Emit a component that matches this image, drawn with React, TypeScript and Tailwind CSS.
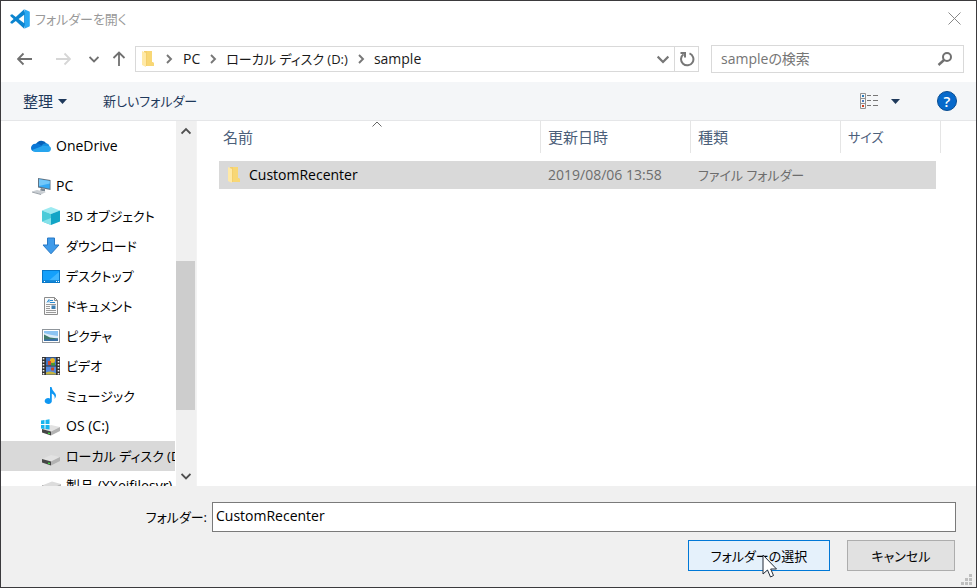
import type { ReactNode } from "react";

function VsCodeLogo() {
  return (
    <svg viewBox="0 0 100 100" className="size-5 shrink-0" aria-hidden="true">
      <path d="M71 1 L29 40 L11 26 L4 29 C1 31 1 34 4 37 L18 50 L4 63 C1 66 1 69 4 71 L11 74 L29 60 L71 99 L76 76 V24 Z" fill="#0b84cf" />
      <path d="M71 29 L43 50 L71 71 Z" fill="#fff" />
      <path d="M71 1 L97 13 Q99 14 99 17 V83 Q99 86 97 87 L71 99 Q74 98 74 94 V6 Q74 3 71 1 Z" fill="#2aa9f3" />
    </svg>
  );
}

function FolderIcon() {
  return (
    <svg viewBox="0 0 14 18" className="h-[18px] w-3.5 shrink-0" aria-hidden="true">
      <path d="M3 1H11V12L13 13V16H3Z" fill="#f4cf6c" />
      <path d="M6 1H11V12L13 13V16H6Z" fill="#f8d775" />
      <path d="M1 1L5 3V17L1 15Z" fill="#ffe9a6" />
    </svg>
  );
}

function Chevron({ dir = "right", className = "size-2.5" }: { dir?: "right" | "down" | "up"; className?: string }) {
  const points = { right: "3,1 7,5 3,9", down: "0.5,3 5,7.5 9.5,3", up: "0.5,7.5 5,3 9.5,7.5" }[dir];
  return (
    <svg viewBox="0 0 10 10" className={`shrink-0 ${className}`} fill="none" stroke="currentColor" strokeWidth="1.9" aria-hidden="true">
      <polyline points={points} />
    </svg>
  );
}

function Arrow({ dir }: { dir: "left" | "right" | "up" }) {
  const d = {
    left: "M15 8H1M6.5 2.5L1 8l5.500 5.500",
    right: "M1 8H15M9.500 2.500L15 8l-5.500 5.500",
    up: "M8 15V1.500M2.500 7L8 1.500l5.500 5.500",
  }[dir];
  return (
    <svg viewBox="0 0 16 16" className="size-4" fill="none" stroke="currentColor" strokeWidth="1.8" aria-hidden="true">
      <path d={d} />
    </svg>
  );
}

function Drive({ windows = false }: { windows?: boolean }) {
  return (
    <svg viewBox="0 0 20 20" className="size-5" aria-hidden="true">
      <path d="M1 13L10 9L19 11L10 15.500Z" fill="#e2e2e2" />
      <path d="M1 13L10 15.500V19.500L1 16.500Z" fill="#454545" />
      <path d="M10 15.500L19 11V15L10 19.500Z" fill="#b2b2b2" />
      <path d="M7 16.500l2 .6v1.200l-2-.6z" fill="#3fe03f" />
      {windows && <path d="M0 4.500l3.500-.5v4H0zM4.500 3.900L8.500 3.300v4.700H4.500zM0 9h3.500v4L0 12.500zM4.500 9H8.500v4.600l-4-.6z" fill="#18b4ee" />}
    </svg>
  );
}

const icons: Record<string, ReactNode> = {
  onedrive: (
    <svg viewBox="0 0 20 20" className="size-5" aria-hidden="true">
      <path d="M5 8A6 6 0 0 1 15.500 7.500L12 13L4 9Z" fill="#0560b8" />
      <path d="M4.500 7.700Q7 7 9.500 9L14 12L3 15.500Q0 15 0 11.800Q.3 8 4.500 7.700Z" fill="#0a77d6" />
      <path d="M10.500 9.500Q12 7.200 15.500 7.300Q18 8 18.500 10.300L17 13L11 12Z" fill="#158fe0" />
      <path d="M3 15.500Q1.500 15 1 14L12 9.800L18.500 10.300Q20 11 20 13Q19.500 16 17 16H5Q3.700 16 3 15.500Z" fill="#27a5ee" />
    </svg>
  ),
  pc: (
    <svg viewBox="0 0 20 20" className="size-5" aria-hidden="true">
      <path d="M7 2L19.500 4V14L7 11.500Z" fill="#5f7385" />
      <path d="M8 3.200L18.700 5V12.800L8 10.600Z" fill="#35a9f5" />
      <path d="M8 3.200L18.700 5V7.500L8 10Z" fill="#73c8fa" />
      <path d="M10 12l4 1v2.500l-5-1z" fill="#7a8792" />
      <path d="M1 15.500L6 14L15 16L10 18.500Z" fill="#c9ced3" />
      <path d="M1 15.500L10 18V19L1 16.500Z" fill="#9aa1a8" />
    </svg>
  ),
  objects: (
    <svg viewBox="0 0 20 20" className="size-5" aria-hidden="true">
      <path d="M10 1L19 4.500L10 8L1 4.500Z" fill="#9ceaf1" />
      <path d="M1 4.500L10 8V19L1 15.500Z" fill="#4bcbd9" />
      <path d="M19 4.500L10 8V19L19 15.500Z" fill="#12a5c6" />
      <path d="M1 15.500L10 12V19Z" fill="#86e2ea" />
    </svg>
  ),
  download: (
    <svg viewBox="0 0 20 20" className="size-5" aria-hidden="true">
      <path d="M6.500 2H13.500V9H18L10 17.800L2 9H6.500Z" fill="#3f9bea" stroke="#2878c4" strokeWidth="1" />
    </svg>
  ),
  desktop: (
    <svg viewBox="0 0 20 20" className="size-5" aria-hidden="true">
      <rect x="1.500" y="4.500" width="17" height="12" fill="#14a0fb" stroke="#0878c9" />
      <path d="M8 14.500L18 6V14.500Z" fill="#3fb6ff" />
      <path d="M2 15H18" stroke="#0c6cb5" />
      <path d="M3 15.500h1M15 15.500h1M17 15.500h1" stroke="#fff" />
    </svg>
  ),
  document: (
    <svg viewBox="0 0 20 20" className="size-5" aria-hidden="true">
      <path d="M3.500 1.500H13.500L16.500 4.500V18.500H3.500Z" fill="#fafafa" stroke="#8c8c8c" />
      <path d="M13.500 1.500V4.500H16.500" fill="none" stroke="#8c8c8c" />
      <path d="M6 6.500l2-3v3M9 4.500h3M9 6.500h5" stroke="#2a8bd0" fill="none" />
      <path d="M5 8.500H15M5 10.500H9M5 12.500H9M5 14.500H15M5 16.500H15" stroke="#9a9a9a" />
      <path d="M10.500 9.500h4v3.500h-4z" fill="#3d7fb3" />
    </svg>
  ),
  picture: (
    <svg viewBox="0 0 20 20" className="size-5" aria-hidden="true">
      <rect x="1.500" y="3.500" width="17" height="13" fill="#fff" stroke="#8f959b" />
      <rect x="3" y="5" width="14" height="10" fill="#8cc4f2" />
      <path d="M3 7Q9 9 17 10V12H3Z" fill="#dcecf8" />
      <path d="M3 8.500L9 11.500L17 12.500V15H3Z" fill="#3f7a6b" />
      <path d="M3 13.500L17 12.800V15H3Z" fill="#3a70a6" />
    </svg>
  ),
  video: (
    <svg viewBox="0 0 20 20" className="size-5" aria-hidden="true">
      <rect x="1" y="1" width="18" height="18" fill="#333" />
      <path d="M2.500 2V19M17.500 2V19" stroke="#f2f2f2" strokeWidth="1.600" strokeDasharray="1.600 1.400" />
      <rect x="5" y="1.500" width="10" height="8" fill="#4277c8" />
      <rect x="5" y="10.500" width="10" height="8" fill="#548be0" />
      <circle cx="11.500" cy="4.500" r="2.500" fill="#ecb624" />
      <path d="M7 5h3v4H7z" fill="#d24b2c" />
      <path d="M10 7h4v2.500h-4z" fill="#4a9a32" />
      <path d="M10 11.500h3v3h-3z" fill="#ca4a2a" />
      <path d="M5 16.500Q10 14 15 17.500V18.500H5Z" fill="#c6b440" />
    </svg>
  ),
  music: (
    <svg viewBox="0 0 20 20" className="size-5" aria-hidden="true">
      <path d="M9 1H10.500Q11 4 13.500 6.500Q16.500 9.500 13.500 13Q14.500 9 10.800 7.500V14.500A3.600 2.900 0 1 1 9 12.500Z" fill="#0f97f2" />
    </svg>
  ),
  os: <Drive windows />,
  drive: <Drive />,
  network: (
    <svg viewBox="0 0 20 20" className="size-5" aria-hidden="true">
      <path d="M1 9.500L11 5.500L20 8L11 12Z" fill="#dcdcdc" />
      <path d="M1 9.500L11 12V16L1 13Z" fill="#555" />
      <path d="M11 12L20 8V12L11 16Z" fill="#b2b2b2" />
      <path d="M4 17.500H17" stroke="#3fae49" strokeWidth="2" />
    </svg>
  ),
};

const treeItems = [
  { icon: "objects", label: "3D オブジェクト" },
  { icon: "download", label: "ダウンロード" },
  { icon: "desktop", label: "デスクトップ" },
  { icon: "document", label: "ドキュメント" },
  { icon: "picture", label: "ピクチャ" },
  { icon: "video", label: "ビデオ" },
  { icon: "music", label: "ミュージック" },
  { icon: "os", label: "OS (C:)", latin: true },
  { icon: "drive", label: "ローカル ディスク (D:)", selected: true },
  { icon: "network", label: "製品 (XXeifilesvr)", latin: true },
];

interface TreeRowProps {
  icon: string;
  label: string;
  nested?: boolean;
  selected?: boolean;
  latin?: boolean;
}

function TreeRow({ icon, label, nested = false, selected = false, latin = false }: TreeRowProps) {
  return (
    <li>
      <button
        type="button"
        className={`flex h-[30px] w-full items-center gap-[5px] overflow-hidden whitespace-nowrap ${nested ? "pl-10" : "pl-[30px]"} ${selected ? "bg-[#d9d9d9]" : ""} ${latin ? "text-sm" : "text-[13px]"}`}
      >
        <span className="shrink-0">{icons[icon]}</span>
        <span>{label}</span>
      </button>
    </li>
  );
}

function Sidebar() {
  return (
    <aside className="flex w-[196px] shrink-0 overflow-hidden border-r border-[#f3f3f3]">
      <nav className="min-w-0 flex-1 overflow-hidden" aria-label="ナビゲーション">
        <ul className="pt-2.5">
          <TreeRow icon="onedrive" label="OneDrive" latin />
          <li className="h-2.5" />
          <TreeRow icon="pc" label="PC" latin />
          {treeItems.map((item) => (
            <TreeRow key={item.label} {...item} nested />
          ))}
        </ul>
      </nav>
      <div className="ml-px flex w-5 flex-col bg-[#f0f0f0] text-[#505050]">
        <button type="button" aria-label="上へスクロール" className="flex h-5 shrink-0 items-center justify-center">
          <Chevron dir="up" />
        </button>
        <div className="flex-[120]" />
        <div className="mr-px flex-[149] bg-[#cdcdcd]" />
        <div className="flex-[56]" />
        <button type="button" aria-label="下へスクロール" className="flex h-5 shrink-0 items-center justify-center">
          <Chevron dir="down" />
        </button>
      </div>
    </aside>
  );
}

function AddressRow() {
  return (
    <div className="flex h-[46px] shrink-0 items-center pr-3 pl-4">
      <div className="flex w-[118px] shrink-0 items-center text-[#707070]">
        <button type="button" aria-label="戻る" className="mr-[22px]"><Arrow dir="left" /></button>
        <button type="button" aria-label="進む" className="mr-[18px] text-[#d6d6d6]"><Arrow dir="right" /></button>
        <button type="button" aria-label="最近表示した場所" className="mr-3"><Chevron dir="down" className="size-2.5" /></button>
        <button type="button" aria-label="上へ"><Arrow dir="up" /></button>
      </div>
      <div className="flex h-[26px] min-w-0 flex-1 border border-[#d9d9d9]">
        <nav aria-label="アドレス" className="flex min-w-0 flex-1 items-center overflow-hidden pl-[5px] whitespace-nowrap text-[#777]">
          <FolderIcon />
          <Chevron className="mx-[9px] size-2.5" />
          <button type="button" className="text-sm text-[#1a1a1a]">PC</button>
          <Chevron className="mx-2 size-2.5" />
          <button type="button" className="text-[13px] text-[#1a1a1a]">ローカル ディスク (D:)</button>
          <Chevron className="mx-2 size-2.5" />
          <button type="button" className="text-sm text-[#1a1a1a]">sample</button>
        </nav>
        <button type="button" aria-label="以前の場所" className="px-[5px] text-[#777]"><Chevron dir="down" className="size-3" /></button>
        <button type="button" aria-label="更新" className="flex w-6 items-center justify-center border-l border-[#d9d9d9] text-[#777]">
          <svg viewBox="0 0 16 16" className="size-4" fill="none" stroke="currentColor" strokeWidth="2" aria-hidden="true">
            <path d="M10.500 2.400A6.200 6.200 0 1 1 4.500 3.200" />
            <path d="M1.500 2H6V6.500" />
          </svg>
        </button>
      </div>
      <div className="ml-3 flex h-7 w-[253px] items-center border border-[#d9d9d9] pr-2.5 pl-[9px]">
        <input type="search" aria-label="sampleの検索" placeholder="sampleの検索" className="min-w-0 flex-1 bg-transparent text-sm outline-none placeholder:text-[#757575]" />
        <svg viewBox="0 0 16 16" className="size-4" fill="none" stroke="#707070" strokeWidth="2" aria-hidden="true">
          <circle cx="10" cy="6" r="4" />
          <path d="M7 9L1.500 14" strokeWidth="2.400" />
        </svg>
      </div>
    </div>
  );
}

function Toolbar() {
  return (
    <div className="flex h-[39px] shrink-0 items-center border-b border-[#e5e6e8] bg-[#f4f6f8] pr-[19px] pl-[22px] text-[#1e395b]">
      <button type="button" className="flex items-center gap-[5px] text-[15px]">
        整理
        <svg viewBox="0 0 9 5" className="h-[5px] w-[9px]" aria-hidden="true"><path d="M0 0H9L4.500 5Z" fill="currentColor" /></svg>
      </button>
      <button type="button" className="ml-9 text-[13px]">新しいフォルダー</button>
      <button type="button" aria-label="表示方法" className="ml-auto flex items-center gap-3">
        <svg viewBox="0 0 19 17" className="h-[17px] w-[19px]" fill="none" aria-hidden="true">
          <path d="M.5.500H5.500V15.500H.5ZM.5 5.500H5.500M.5 10.500H5.500" stroke="#929292" />
          <path d="M7 2.500H11M13 2.500H18M7 7.500H11M13 7.500H18M7 12.500H11M13 12.500H18" stroke="#777" />
          <path d="M2 2h2v2H2z" fill="#2b7bb9" />
          <path d="M2 7h2v2H2z" fill="#4e7cbd" />
          <path d="M2 12h2v2H2z" fill="#d0401c" />
        </svg>
        <svg viewBox="0 0 9 5" className="h-[5px] w-[9px]" aria-hidden="true"><path d="M0 0H9L4.500 5Z" fill="currentColor" /></svg>
      </button>
      <button type="button" aria-label="ヘルプ" className="ml-[37px] flex size-5 items-center justify-center rounded-full border border-[#084c91] bg-[#0669cb] text-[15px] leading-none font-semibold text-white">
        ?
      </button>
    </div>
  );
}

const columns = [
  { label: "名前", style: "pl-1 text-[15px]", sorted: true },
  { label: "更新日時", style: "pl-[7px] text-[15px]" },
  { label: "種類", style: "pl-[7px] text-[15px]" },
  { label: "サイズ", style: "pl-[7px] text-[13px]" },
];

function FileList() {
  return (
    <main className="min-w-0 flex-1 overflow-hidden pl-[22px]">
      <table className="w-[722px] table-fixed border-separate border-spacing-0 text-left">
        <colgroup>
          <col className="w-[322px]" />
          <col className="w-[150px]" />
          <col className="w-[150px]" />
          <col className="w-[100px]" />
        </colgroup>
        <thead>
          <tr>
            {columns.map((c) => (
              <th key={c.label} className="p-0 pb-2 font-normal text-[#4c607a]">
                <div className={`relative flex h-8 items-center border-r border-[#e5e5e5] ${c.style}`}>
                  {c.label}
                  {c.sorted && (
                    <svg viewBox="0 0 10 6" className="absolute top-0 left-[153px] h-1.5 w-2.5" fill="none" stroke="#666" aria-hidden="true">
                      <path d="M.5 5.500L5 1L9.500 5.500" />
                    </svg>
                  )}
                </div>
              </th>
            ))}
          </tr>
        </thead>
        <tbody>
          <tr className="text-sm text-[#6d6d6d]">
            <td className="bg-[#d9d9d9] p-0">
              <div className="flex h-7 items-center gap-2 pl-2 text-black">
                <FolderIcon />
                CustomRecenter
              </div>
            </td>
            <td className="bg-[#d9d9d9] p-0 pl-[7px]">2019/08/06 13:58</td>
            <td className="bg-[#d9d9d9] p-0 pl-[7px] text-[13px]">ファイル フォルダー</td>
            <td className="p-0"><div className="mr-[5px] h-7 bg-[#d9d9d9]" /></td>
          </tr>
        </tbody>
      </table>
    </main>
  );
}

function Footer() {
  return (
    <footer className="relative h-[101px] shrink-0 bg-[#f0f0f0] pt-4 pr-5">
      <div className="flex items-center">
        <label htmlFor="folder" className="w-[211px] pr-[5px] text-right text-[13px]">フォルダー:</label>
        <input id="folder" defaultValue="CustomRecenter" className="h-[30px] min-w-0 flex-1 border border-[#7a7a7a] bg-white px-[3px] pb-1 text-sm outline-none" />
      </div>
      <div className="mt-2 mr-px flex justify-end gap-[17px] text-[13px]">
        <button type="button" className="relative h-[31px] w-[142px] border border-[#0078d7] bg-[#e5f1fb]">
          フォルダーの選択
          <svg viewBox="0 0 16 24" className="absolute top-[13px] left-[73px] h-6 w-4" aria-hidden="true">
            <path d="M1 1V20L5.500 16L8.500 23L11.500 21.500L8.700 15H14.500Z" fill="#fff" stroke="#222b38" />
          </svg>
        </button>
        <button type="button" className="h-[31px] w-[108px] border border-[#adadad] bg-[#e1e1e1]">キャンセル</button>
      </div>
      <svg viewBox="0 0 11 11" className="absolute right-1 bottom-0.5 size-[11px]" fill="#bfbfbf" aria-hidden="true">
        <path d="M8 0h3v3H8zM4 4h3v3H4zM8 4h3v3H8zM0 8h3v3H0zM4 8h3v3H4zM8 8h3v3H8z" />
      </svg>
    </footer>
  );
}

export default function App() {
  return (
    <div className="flex h-screen flex-col border border-[#3b3a3d] bg-white text-sm leading-5 text-black [font-family:'Open_Sans','Noto_Sans_CJK_JP',sans-serif] [font-feature-settings:'palt']">
      <header className="flex h-[35px] shrink-0 items-center gap-[5px] pr-[15px] pl-[9px] text-[#999]">
        <VsCodeLogo />
        <h1 className="text-[13px]">フォルダーを開く</h1>
        <button type="button" aria-label="閉じる" className="ml-auto">
          <svg viewBox="0 0 13 13" className="size-[13px]" fill="none" stroke="#888" aria-hidden="true">
            <path d="M.5.500L12.500 12.500M12.500.500L.5 12.500" />
          </svg>
        </button>
      </header>
      <AddressRow />
      <Toolbar />
      <div className="flex min-h-0 flex-1">
        <Sidebar />
        <FileList />
      </div>
      <Footer />
    </div>
  );
}
